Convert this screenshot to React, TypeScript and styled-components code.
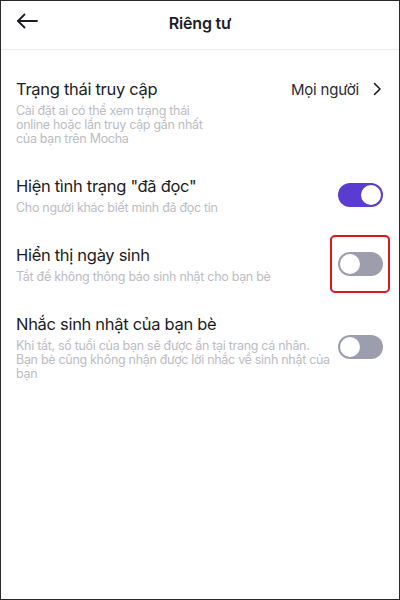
import styled, { createGlobalStyle } from 'styled-components';

const GlobalStyle = createGlobalStyle`
  * { box-sizing: border-box; }
  body {
    margin: 0;
    font-family: Inter, "Noto Sans", "Liberation Sans", sans-serif;
    background: #fff;
  }
`;

interface Setting {
  title: string;
  desc: string;
  on?: boolean;
  highlight?: boolean;
}

const settings: Setting[] = [
  { title: 'Hiện tình trạng "đã đọc"', desc: 'Cho người khác biết mình đã đọc tin', on: true },
  { title: 'Hiển thị ngày sinh', desc: 'Tắt để không thông báo sinh nhật cho bạn bè', on: false, highlight: true },
  {
    title: 'Nhắc sinh nhật của bạn bè',
    desc: 'Khi tắt, số tuổi của bạn sẽ được ẩn tại trang cá nhân. Bạn bè cũng không nhận được lời nhắc về sinh nhật của bạn',
    on: false,
  },
];

function App() {
  return (
    <Frame>
      <GlobalStyle />
      <Header>
        <BackButton>
          <svg width="22" height="16" viewBox="0 0 22 16" fill="none" stroke="#1c1c24" strokeWidth="1.8" strokeLinecap="round" strokeLinejoin="round">
            <path d="M21 8H2" />
            <path d="M8.5 1.5L2 8l6.5 6.5" />
          </svg>
        </BackButton>
        <Title>Riêng tư</Title>
      </Header>
      <List>
        <Row $top>
          <TextCol $narrow>
            <RowTitle>Trạng thái truy cập</RowTitle>
            <RowDesc>Cài đặt ai có thể xem trạng thái online hoặc lần truy cập gần nhất của bạn trên Mocha</RowDesc>
          </TextCol>
          <ValueLink>
            <span>Mọi người</span>
            <svg width="10" height="14" viewBox="0 0 10 14" fill="none" stroke="#1c1c24" strokeWidth="1.6" strokeLinecap="round" strokeLinejoin="round">
              <path d="M2.5 1.5L8 7l-5.5 5.5" />
            </svg>
          </ValueLink>
        </Row>
        {settings.map((s, idx) => (
          <Row key={idx}>
            <TextCol>
              <RowTitle>{s.title}</RowTitle>
              <RowDesc>{s.desc}</RowDesc>
            </TextCol>
            <ToggleWrap $highlight={s.highlight}>
              <Toggle $on={!!s.on}>
                <Knob />
              </Toggle>
            </ToggleWrap>
          </Row>
        ))}
      </List>
    </Frame>
  );
}

export default App;

const Frame = styled.div`
  width: 400px;
  height: 600px;
  border: 1px solid #2a2a2a;
  background: #fff;
  overflow: hidden;
`;

const Header = styled.div`
  position: relative;
  display: flex;
  align-items: flex-start;
  justify-content: center;
  height: 49px;
  padding-top: 12px;
  border-bottom: 1px solid #ececef;
`;

const BackButton = styled.div`
  position: absolute;
  left: 15px;
  top: 12px;
  display: flex;
`;

const Title = styled.h1`
  margin: 0;
  font-size: 16px;
  line-height: 20px;
  font-weight: 600;
  letter-spacing: -0.2px;
  color: #1c1c24;
`;

const List = styled.div`
  display: flex;
  flex-direction: column;
  padding-top: 12px;
`;

const Row = styled.div<{ $top?: boolean }>`
  display: flex;
  align-items: ${(p) => (p.$top ? 'flex-start' : 'center')};
  justify-content: space-between;
  padding: 16px 16px 13px 15px;
`;

const TextCol = styled.div<{ $narrow?: boolean }>`
  display: flex;
  flex-direction: column;
  gap: 4px;
  flex: ${(p) => (p.$narrow ? '0 1 auto' : '1')};
  max-width: ${(p) => (p.$narrow ? '200px' : '315px')};
`;

const RowTitle = styled.div`
  font-size: 16.5px;
  line-height: 22px;
  letter-spacing: -0.3px;
  color: #1c1c24;
  white-space: nowrap;
`;

const RowDesc = styled.div`
  font-size: 12.5px;
  line-height: 14px;
  letter-spacing: -0.3px;
  color: #bcbcc4;
`;

const ValueLink = styled.div`
  display: flex;
  align-items: center;
  gap: 13px;
  height: 22px;
  margin-right: 1px;
  font-size: 15px;
  letter-spacing: -0.2px;
  color: #2a2a32;
`;

const ToggleWrap = styled.div<{ $highlight?: boolean }>`
  flex-shrink: 0;
  display: flex;
  align-items: center;
  justify-content: center;
  width: 60px;
  height: 58px;
  margin: -17px -7px -17px -8px;
  border: 2px solid ${(p) => (p.$highlight ? '#e0141b' : 'transparent')};
  border-radius: 5px;
`;

const Toggle = styled.div<{ $on: boolean }>`
  display: flex;
  justify-content: ${(p) => (p.$on ? 'flex-end' : 'flex-start')};
  align-items: center;
  width: 45px;
  height: 24px;
  padding: 2px;
  border-radius: 12px;
  background: ${(p) => (p.$on ? '#5a3dd0' : '#9c9eae')};
`;

const Knob = styled.div`
  width: 20px;
  height: 20px;
  border-radius: 50%;
  background: #fff;
`;
